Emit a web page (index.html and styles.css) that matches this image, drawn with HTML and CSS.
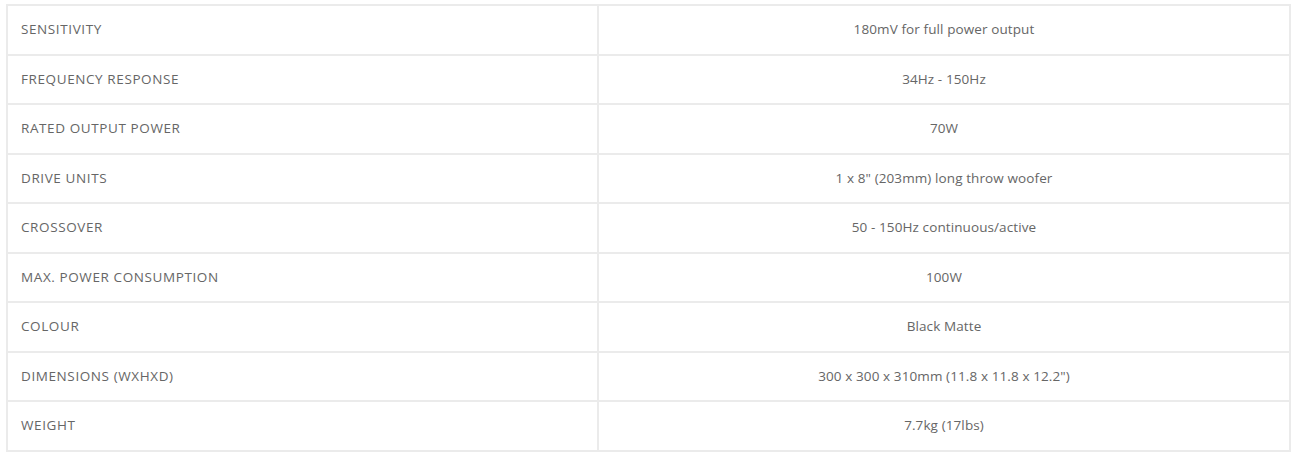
FILE: index.html
```html
<!DOCTYPE html>
<html lang="en">
<head>
<meta charset="utf-8">
<title>Specifications</title>
<link rel="stylesheet" href="styles.css">
</head>
<body>
<table class="specs">
  <tbody>
    <tr><td class="label">SENSITIVITY</td><td class="value">180mV for full power output</td></tr>
    <tr><td class="label">FREQUENCY RESPONSE</td><td class="value">34Hz - 150Hz</td></tr>
    <tr><td class="label">RATED OUTPUT POWER</td><td class="value">70W</td></tr>
    <tr><td class="label">DRIVE UNITS</td><td class="value">1 x 8" (203mm) long throw woofer</td></tr>
    <tr><td class="label">CROSSOVER</td><td class="value">50 - 150Hz continuous/active</td></tr>
    <tr><td class="label">MAX. POWER CONSUMPTION</td><td class="value">100W</td></tr>
    <tr><td class="label">COLOUR</td><td class="value">Black Matte</td></tr>
    <tr><td class="label">DIMENSIONS (WXHXD)</td><td class="value">300 x 300 x 310mm (11.8 x 11.8 x 12.2")</td></tr>
    <tr><td class="label">WEIGHT</td><td class="value">7.7kg (17lbs)</td></tr>
  </tbody>
</table>
</body>
</html>
```
FILE: styles.css
```css
html, body {
  margin: 0;
  padding: 0;
  background: #ffffff;
}

body {
  padding: 4px 0 0 6px;
  font-family: "Open Sans", "Liberation Sans", sans-serif;
  font-size: 13.5px;
  color: #666666;
}

.specs {
  border-collapse: separate;
  border-spacing: 0;
  width: 1285px;
  table-layout: fixed;
  border-top: 2px solid #ebebeb;
  border-left: 2px solid #ebebeb;
}

.specs td {
  border-right: 2px solid #ebebeb;
  border-bottom: 2px solid #ebebeb;
  padding: 14px 13px;
  line-height: 19.5px;
  vertical-align: middle;
}

.specs .label {
  width: 563px;
  text-align: left;
  letter-spacing: 0.6px;
}

.specs .value {
  text-align: center;
  letter-spacing: 0.1px;
}
```
